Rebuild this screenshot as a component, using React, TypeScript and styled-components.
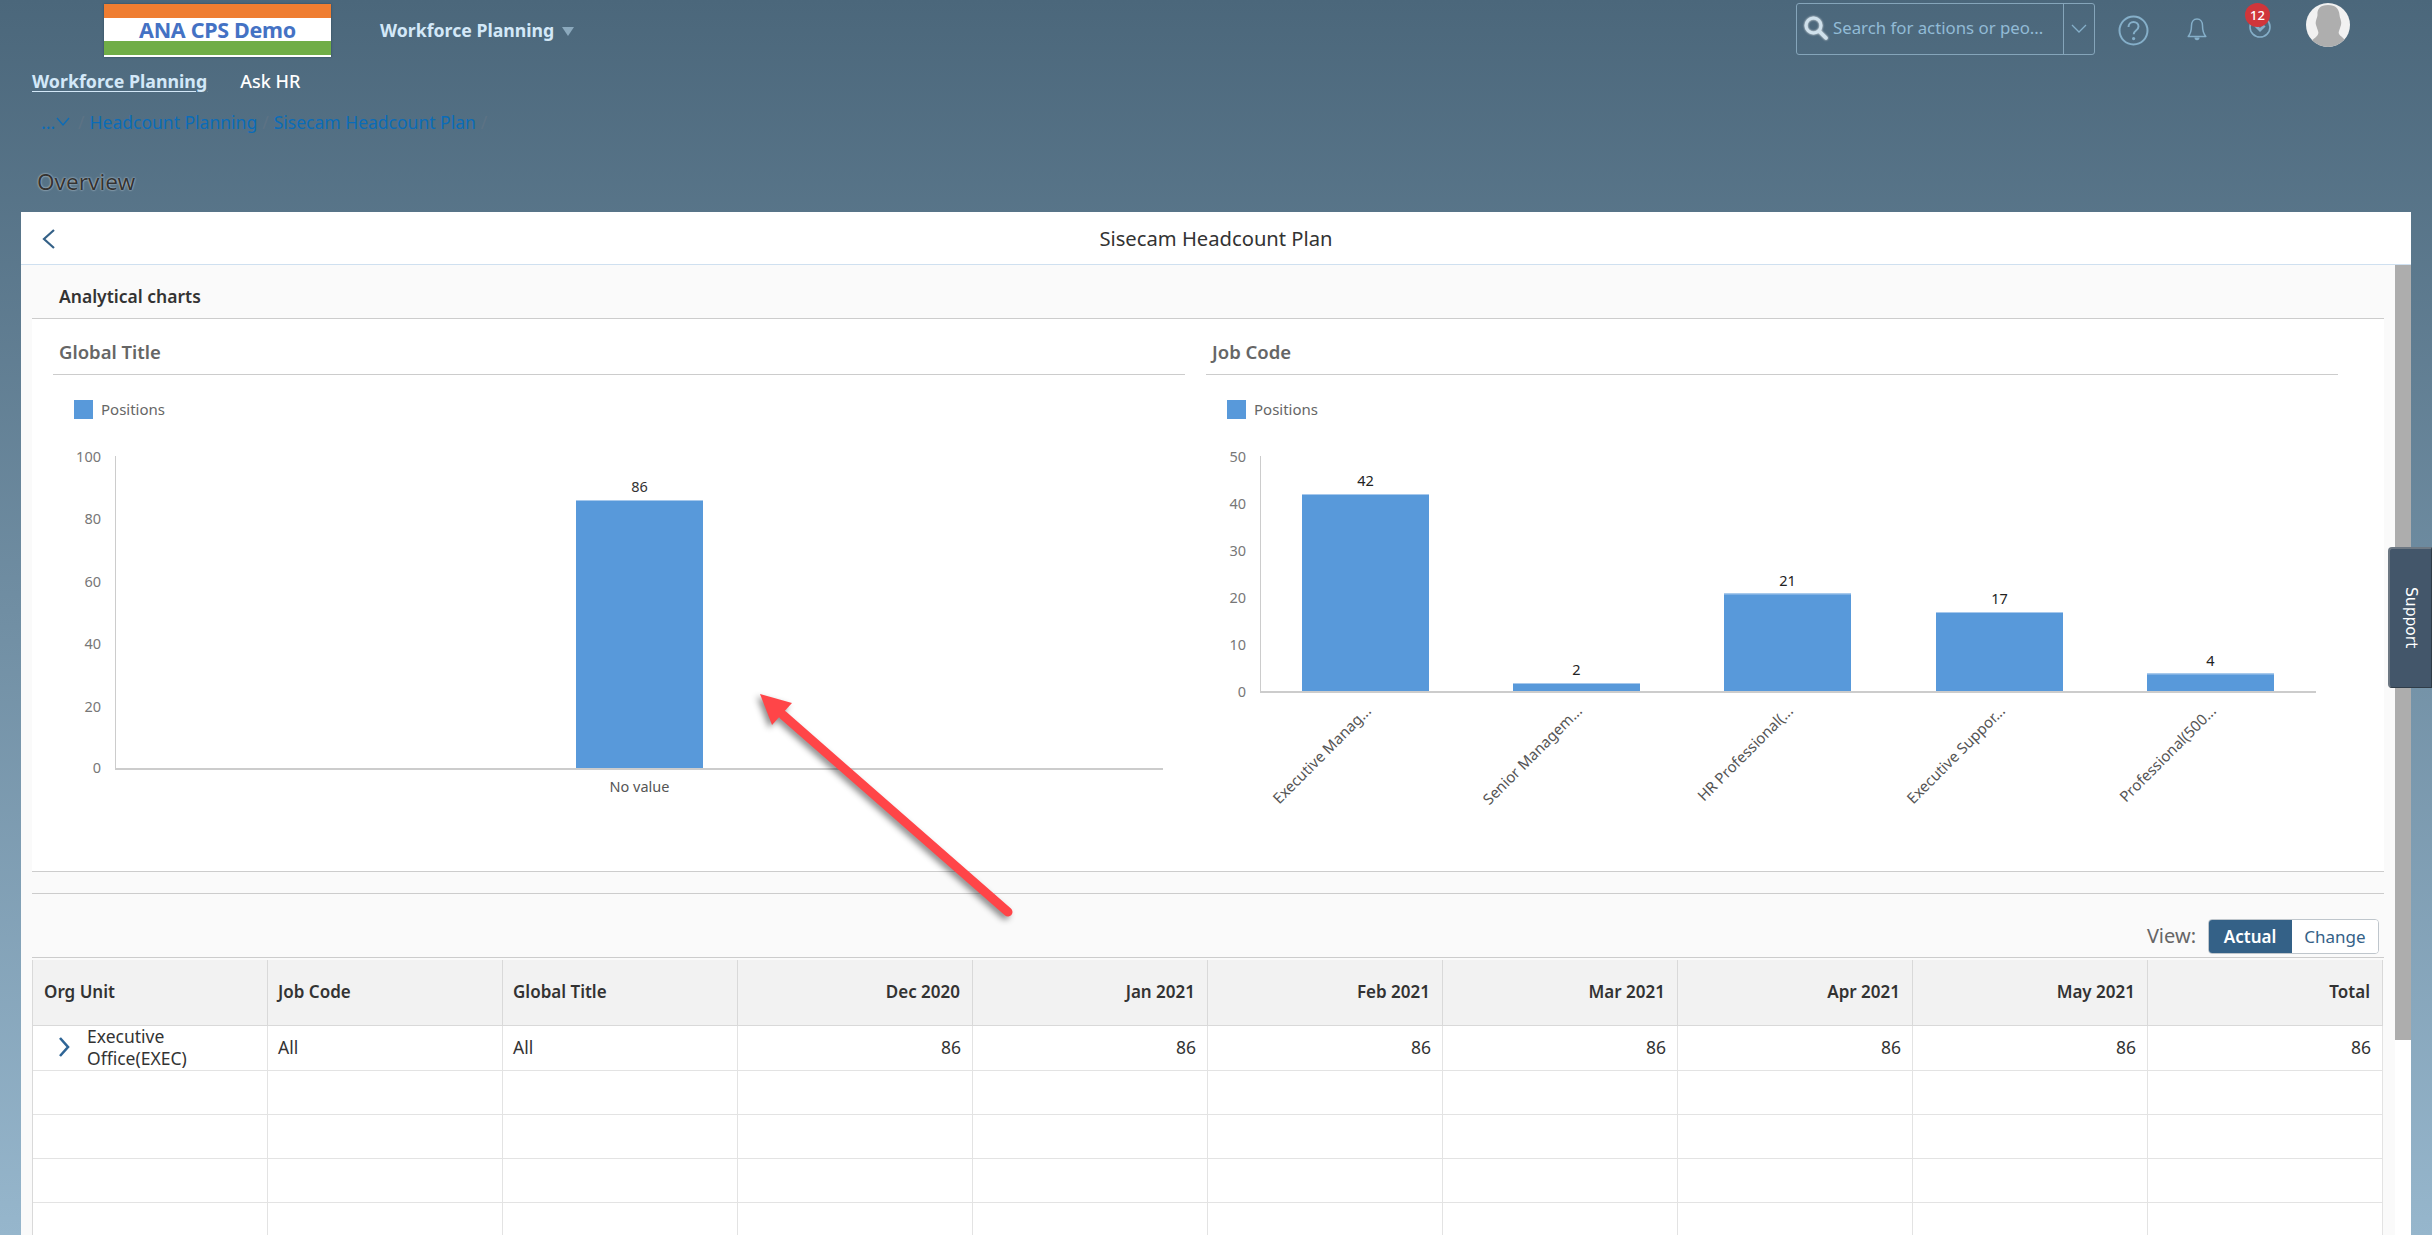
import React from "react";
import styled, { createGlobalStyle } from "styled-components";

const FONT = `"Noto Sans", "Open Sans", Arial, sans-serif`;

const Global = createGlobalStyle`
  html, body { margin: 0; padding: 0; }
  body { font-family: ${FONT}; overflow: hidden; }
  * { box-sizing: border-box; }
`;

const Page = styled.div`
  position: relative;
  width: 2432px;
  height: 1235px;
  overflow: hidden;
  display: flex;
  flex-direction: column;
  background: linear-gradient(180deg, #4b677b 0%, #96b6cc 100%);
`;

const TopBar = styled.header`
  height: 60px;
  display: flex;
  align-items: flex-start;
  padding-left: 104px;
`;

const Logo = styled.div`
  width: 227px;
  height: 53px;
  margin-top: 4px;
  display: flex;
  flex-direction: column;
  background: #fff;
  box-shadow: 0 0 2px rgba(20, 40, 60, 0.5);
`;

const LogoStripe = styled.div<{ $color: string }>`
  height: 14px;
  background: ${(p) => p.$color};
`;

const LogoText = styled.div`
  height: 23px;
  line-height: 23px;
  text-align: center;
  font-size: 21.5px;
  font-weight: 700;
  letter-spacing: -0.3px;
  color: #4472c4;
`;

const AppMenu = styled.div`
  margin-left: 49px;
  height: 60px;
  display: flex;
  align-items: center;
  gap: 8px;
  font-size: 17.7px;
  font-weight: 700;
  color: #d3e8f8;
`;

const Caret = styled.span`
  width: 0;
  height: 0;
  border-left: 6px solid transparent;
  border-right: 6px solid transparent;
  border-top: 9px solid #8ba9bd;
  margin-top: 2px;
`;

const Tools = styled.div`
  margin-left: auto;
  height: 60px;
  display: flex;
  align-items: flex-start;
  padding-right: 82px;
`;

const SearchBox = styled.div`
  margin-top: 3px;
  width: 299px;
  height: 52px;
  display: flex;
  border: 1px solid #85a5ba;
  border-radius: 3px;
`;

const SearchField = styled.div`
  flex: 1;
  display: flex;
  align-items: center;
  gap: 5px;
  padding: 0 0 3px 7px;
  font-size: 16.8px;
  color: #92bbd6;
  white-space: nowrap;
`;

const SearchGlyph = styled.svg`
  flex: none;
  filter: drop-shadow(0 0 1px #fff);
`;

const SearchToggle = styled.div`
  width: 31px;
  border-left: 1px solid #85a5ba;
  display: flex;
  align-items: center;
  justify-content: center;
`;

const ToolIcon = styled.svg<{ $left: number; $top: number }>`
  display: block;
  flex: none;
  margin-left: ${(p) => p.$left}px;
  margin-top: ${(p) => p.$top}px;
`;

const Notification = styled.div`
  position: relative;
  margin-left: 42px;
  margin-top: 16px;
  width: 22px;
  height: 22px;
`;

const Badge = styled.span`
  position: absolute;
  left: -4px;
  top: -13px;
  width: 25px;
  height: 24px;
  border-radius: 50%;
  background: #d0363b;
  color: #fff;
  font-size: 13px;
  font-weight: 500;
  line-height: 24px;
  text-align: center;
`;

const Avatar = styled.div`
  margin-left: 35px;
  margin-top: 3px;
  width: 44px;
  height: 44px;
  border-radius: 50%;
  overflow: hidden;
  background: #f1f1f1;
`;

const SubNav = styled.nav`
  height: 44px;
  display: flex;
  align-items: center;
  padding: 0 0 3px 32px;
  gap: 33px;
`;

const SubNavItem = styled.span<{ $active?: boolean }>`
  color: ${(p) => (p.$active ? "#d3e8f8" : "#fff")};
  font-size: ${(p) => (p.$active ? 17.8 : 18)}px;
  font-weight: ${(p) => (p.$active ? 700 : 500)};
  text-decoration: ${(p) => (p.$active ? "underline" : "none")};
  text-underline-offset: 3px;
`;

const Breadcrumb = styled.div`
  height: 36px;
  display: flex;
  align-items: center;
  padding-left: 41px;
  font-size: 17.5px;
  color: #0a6cb8;
`;

const Slash = styled.span`
  color: #5d7385;
  margin: 0 5px;
`;

const BreadcrumbMore = styled.span`
  display: flex;
  align-items: center;
  gap: 1px;
  margin-right: 3px;
`;

const Overview = styled.h1`
  margin: 0;
  height: 72px;
  display: flex;
  align-items: center;
  padding: 10px 0 0 37px;
  font-size: 22.5px;
  font-weight: 400;
  color: #333;
  text-shadow: 0 0 2px #e3e9ed;
`;

const Panel = styled.main`
  width: 2390px;
  margin-left: 21px;
  flex: 1;
  min-height: 0;
  display: flex;
  flex-direction: column;
  background: #fafafa;
`;

const PanelHeader = styled.div`
  position: relative;
  height: 53px;
  flex: none;
  display: flex;
  align-items: center;
  justify-content: center;
  background: #fff;
  border-bottom: 1px solid #cfe0f0;
  font-size: 20.2px;
  color: #333;
`;

const BackButton = styled.svg`
  position: absolute;
  left: 21px;
  top: 17px;
`;

const PanelBody = styled.div`
  flex: 1;
  min-height: 0;
  display: flex;
`;

const Content = styled.div`
  flex: 1;
  min-width: 0;
  padding: 0 11px;
  overflow: hidden;
`;

const ScrollTrack = styled.div`
  width: 16px;
  flex: none;
  background: #fff;
`;

const ScrollThumb = styled.div`
  height: 775px;
  background: #adadad;
`;

const SectionHeader = styled.div`
  height: 54px;
  padding: 8px 0 0 27px;
  display: flex;
  align-items: center;
  border-bottom: 1px solid #ccc;
  font-size: 17.5px;
  font-weight: 600;
  color: #333;
`;

const ChartsCard = styled.section`
  height: 553px;
  background: #fff;
  border-bottom: 1px solid #ccc;
  display: flex;
  padding-left: 21px;
  gap: 21px;
`;

const ChartColumn = styled.div`
  width: 1132px;
  flex: none;
`;

const ChartTitle = styled.div`
  height: 56px;
  padding: 9px 0 0 6px;
  display: flex;
  align-items: center;
  border-bottom: 1px solid #ccc;
  font-size: 18.5px;
  font-weight: 600;
  color: #666;
`;

const Legend = styled.div`
  height: 65px;
  padding: 25px 0 0 21px;
  display: flex;
  align-items: flex-start;
  gap: 8px;
  font-size: 15px;
  line-height: 18px;
  color: #666;
`;

const LegendSwatch = styled.span`
  width: 19px;
  height: 19px;
  background: #5899da;
`;

const ChartSvg = styled.svg`
  display: block;
  font-family: ${FONT};
`;

const Spacer = styled.div`
  height: 22px;
  border-bottom: 1px solid #ccc;
`;

const TableToolbar = styled.div`
  height: 64px;
  display: flex;
  align-items: flex-start;
  justify-content: flex-end;
  padding: 25px 5px 0 0;
  gap: 12px;
  border-bottom: 1px solid #ccc;
  color: #666;
`;

const ViewLabel = styled.span`
  font-size: 20px;
  line-height: 34px;
`;

const Segmented = styled.div`
  display: flex;
  height: 35px;
  width: 171px;
  border-radius: 4px;
  overflow: hidden;
  border: 1px solid #bfc6cc;
  background: #fff;
`;

const Segment = styled.span<{ $on?: boolean }>`
  display: flex;
  align-items: center;
  justify-content: center;
  flex: ${(p) => (p.$on ? "0 0 84px" : 1)};
  margin: ${(p) => (p.$on ? "-1px 0 -1px -1px" : 0)};
  background: ${(p) => (p.$on ? "#346187" : "#fff")};
  color: ${(p) => (p.$on ? "#fff" : "#346187")};
  font-size: 17px;
  font-weight: ${(p) => (p.$on ? 600 : 400)};
`;

const Table = styled.div`
  margin-top: 2px;
  display: grid;
  grid-template-columns: repeat(10, 235px);
  border-left: 1px solid #d9d9d9;
  color: #333;
`;

const HeadCell = styled.div<{ $right?: boolean; $first?: boolean }>`
  height: 66px;
  display: flex;
  align-items: center;
  justify-content: ${(p) => (p.$right ? "flex-end" : "flex-start")};
  padding: 0 12px 2px ${(p) => (p.$first ? 11 : 10)}px;
  background: #f2f2f2;
  border-right: 1px solid #d9d9d9;
  border-bottom: 1px solid #d9d9d9;
  font-size: 17px;
  font-weight: 600;
`;

const Cell = styled.div<{ $right?: boolean; $tall?: boolean }>`
  height: ${(p) => (p.$tall ? 45 : 44)}px;
  display: flex;
  align-items: center;
  justify-content: ${(p) => (p.$right ? "flex-end" : "flex-start")};
  padding: 0 11px 2px 10px;
  background: #fff;
  border-right: 1px solid #e3e3e3;
  border-bottom: 1px solid #e3e3e3;
  font-size: 17.5px;
`;

const TreeCell = styled(Cell)`
  padding-left: 25px;
  gap: 17px;
`;

const TreeChevron = styled.svg`
  flex: none;
`;

const TreeLabel = styled.span`
  line-height: 22px;
  font-size: 17.5px;
`;

const SupportTab = styled.aside`
  position: absolute;
  left: 2388px;
  top: 547px;
  width: 44px;
  height: 141px;
  display: flex;
  align-items: center;
  justify-content: center;
  background: #43566a;
  border: 1px solid #2f3c48;
  border-top: 2px solid #6d7883;
  border-left: 2px solid #6d7883;
  border-radius: 4px 0 0 4px;
  color: #fff;
  font-family: "DejaVu Sans", sans-serif;
  font-size: 15.5px;
`;

const SupportText = styled.span`
  writing-mode: vertical-rl;
`;

const ArrowOverlay = styled.svg`
  position: absolute;
  left: 740px;
  top: 680px;
  pointer-events: none;
  filter: drop-shadow(-3px 3px 3px rgba(0, 0, 0, 0.45));
`;

type Bar = { v: number; x: number; top: number; label?: string };

const AXIS = "#ccc";
const TICK = "#777";

function GlobalChart() {
  // SVG origin: page (53, 440)
  const ticks: [string, number][] = [
    ["100", 18], ["80", 79.5], ["60", 143], ["40", 205], ["20", 268], ["0", 329],
  ];
  return (
    <ChartSvg width={1131} height={431} viewBox="0 0 1131 431">
      <rect x={62} y={16} width={1} height={313} fill={AXIS} />
      <rect x={62} y={328} width={1048} height={2} fill={AXIS} />
      {ticks.map(([t, y]) => (
        <text key={t} x={48} y={y + 4} textAnchor="end" fontSize={14.5} fill={TICK}>{t}</text>
      ))}
      <rect x={523} y={61} width={127} height={267} fill="#5899da" />
      <rect x={523} y={60} width={127} height={1} fill="#a6c8ec" />
      <text x={586.5} y={52} textAnchor="middle" fontSize={14.5} fill="#333">86</text>
      <text x={586.5} y={352} textAnchor="middle" fontSize={14.5} fill="#555">No value</text>
    </ChartSvg>
  );
}

function JobChart() {
  // SVG origin: page (1206, 440)
  const ticks: [string, number][] = [
    ["50", 18], ["40", 65], ["30", 112], ["20", 159], ["10", 206], ["0", 253],
  ];
  const bars: Bar[] = [
    { v: 42, x: 96, top: 54, label: "Executive Manag..." },
    { v: 2, x: 307, top: 243, label: "Senior Managem..." },
    { v: 21, x: 518, top: 153.5, label: "HR Professional(..." },
    { v: 17, x: 730, top: 172, label: "Executive Suppor..." },
    { v: 4, x: 941, top: 233.5, label: "Professional(500..." },
  ];
  return (
    <ChartSvg width={1131} height={431} viewBox="0 0 1131 431">
      <rect x={54} y={16} width={1} height={236} fill={AXIS} />
      {ticks.map(([t, y]) => (
        <text key={t} x={40} y={y + 4} textAnchor="end" fontSize={14.5} fill={TICK}>{t}</text>
      ))}
      {bars.map((b) => (
        <g key={b.v}>
          <rect x={b.x} y={b.top} width={127} height={251 - b.top} fill="#5899da" />
          <rect x={b.x} y={b.top} width={127} height={1} fill="#a6c8ec" />
          <text x={b.x + 63.5} y={b.top - 8} textAnchor="middle" fontSize={14.5} fill="#222">{b.v}</text>
          <text
            x={b.x + 70}
            y={272}
            textAnchor="end"
            fontSize={15}
            fill="#555"
            transform={`rotate(-45 ${b.x + 70} 272)`}
          >
            {b.label}
          </text>
        </g>
      ))}
      <rect x={54} y={251} width={1056} height={2} fill={AXIS} />
    </ChartSvg>
  );
}

const months = ["Dec 2020", "Jan 2021", "Feb 2021", "Mar 2021", "Apr 2021", "May 2021", "Total"];

export default function App() {
  return (
    <Page>
      <Global />
      <TopBar>
        <Logo>
          <LogoStripe $color="#ef7d31" />
          <LogoText>ANA CPS Demo</LogoText>
          <LogoStripe $color="#70ad47" />
        </Logo>
        <AppMenu>
          Workforce Planning <Caret />
        </AppMenu>
        <Tools>
          <SearchBox>
            <SearchField>
              <SearchGlyph width="24" height="24" viewBox="0 0 24 24" fill="none">
                <circle cx="9.5" cy="9.5" r="7.5" stroke="#cfe1ec" strokeWidth="3" />
                <path d="M15 15l7 7" stroke="#cfe1ec" strokeWidth="3.5" strokeLinecap="round" />
              </SearchGlyph>
              Search for actions or peo...
            </SearchField>
            <SearchToggle>
              <svg width="16" height="10" viewBox="0 0 16 10" fill="none">
                <path d="M1 1l7 7 7-7" stroke="#85afc9" strokeWidth="1.3" />
              </svg>
            </SearchToggle>
          </SearchBox>
          <ToolIcon $left={23} $top={15} width="31" height="31" viewBox="0 0 31 31" fill="none">
            <circle cx="15.5" cy="15.5" r="14" stroke="#85afc9" strokeWidth="2" />
            <path d="M10.5 12c0-3 2.2-5 5-5s5 2 5 4.6c0 2-1.1 3.1-2.7 4.2-1.4 1-2.1 1.8-2.1 3.4" stroke="#85afc9" strokeWidth="2" />
            <circle cx="15.6" cy="23.6" r="1.6" fill="#85afc9" />
          </ToolIcon>
          <ToolIcon $left={38} $top={18} width="20" height="24" viewBox="0 0 20 24" fill="none">
            <path d="M10 1c-3.5 0-5.5 2.8-5.5 6.5 0 5-.8 8-3.3 11h17.600c-2.500-3-3.300-6-3.300-11C15.500 3.800 13.500 1 10 1z" stroke="#85afc9" strokeWidth="1.500" strokeLinejoin="round" />
            <path d="M7.500 19.500h5a2.500 2.800 0 0 1-5 0z" fill="#85afc9" />
          </ToolIcon>
          <Notification>
            <svg width="22" height="22" viewBox="0 0 22 22" fill="none">
              <circle cx="11" cy="11" r="10" stroke="#85afc9" strokeWidth="1.600" />
              <path d="M6.500 9.500l4.500 4.500 4.500-4.500" stroke="#85afc9" strokeWidth="3" />
            </svg>
            <Badge>12</Badge>
          </Notification>
          <Avatar>
            <svg width="44" height="44" viewBox="0 0 44 44">
              <path fill="#aeaeae" d="M22 2c8 0 11 4 11.500 10 .5 4 2.500 6 1.500 10l-2 6c-1 2 0 4 3 6l4 4c-5 5-12 6-18 6-7 0-13-1-17-6l5-4c2-2 3-4 2-6l-2-6c-1-4 1-6 1.500-10C11 6 14 2 22 2z" />
            </svg>
          </Avatar>
        </Tools>
      </TopBar>
      <SubNav>
        <SubNavItem $active>Workforce Planning</SubNavItem>
        <SubNavItem>Ask HR</SubNavItem>
      </SubNav>
      <Breadcrumb>
        <BreadcrumbMore>
          <span>...</span>
          <svg width="14" height="10" viewBox="0 0 14 10" fill="none">
            <path d="M1 1l6 7 6-7" stroke="#0a6cb8" strokeWidth="1.200" />
          </svg>
        </BreadcrumbMore>
        <Slash>/</Slash>
        Headcount Planning
        <Slash>/</Slash>
        Sisecam Headcount Plan
        <Slash>/</Slash>
      </Breadcrumb>
      <Overview>Overview</Overview>
      <Panel>
        <PanelHeader>
          <BackButton width="14" height="20" viewBox="0 0 14 20" fill="none">
            <path d="M12 1L2 10l10 9" stroke="#346187" strokeWidth="2.200" />
          </BackButton>
          Sisecam Headcount Plan
        </PanelHeader>
        <PanelBody>
          <Content>
            <SectionHeader>Analytical charts</SectionHeader>
            <ChartsCard>
              <ChartColumn>
                <ChartTitle>Global Title</ChartTitle>
                <Legend><LegendSwatch />Positions</Legend>
                <GlobalChart />
              </ChartColumn>
              <ChartColumn>
                <ChartTitle>Job Code</ChartTitle>
                <Legend><LegendSwatch />Positions</Legend>
                <JobChart />
              </ChartColumn>
            </ChartsCard>
            <Spacer />
            <TableToolbar>
              <ViewLabel>View:</ViewLabel>
              <Segmented>
                <Segment $on>Actual</Segment>
                <Segment>Change</Segment>
              </Segmented>
            </TableToolbar>
            <Table>
              <HeadCell $first>Org Unit</HeadCell>
              <HeadCell>Job Code</HeadCell>
              <HeadCell>Global Title</HeadCell>
              {months.map((m) => (
                <HeadCell key={m} $right>{m}</HeadCell>
              ))}
              <TreeCell $tall>
                <TreeChevron width="12" height="20" viewBox="0 0 12 20" fill="none">
                  <path d="M2 1l8 9-8 9" stroke="#2f6596" strokeWidth="2.600" />
                </TreeChevron>
                <TreeLabel>Executive Office(EXEC)</TreeLabel>
              </TreeCell>
              <Cell $tall>All</Cell>
              <Cell $tall>All</Cell>
              {months.map((m) => (
                <Cell key={m} $tall $right>86</Cell>
              ))}
              {Array.from({ length: 40 }, (_, i) => (
                <Cell key={i} />
              ))}
            </Table>
          </Content>
          <ScrollTrack><ScrollThumb /></ScrollTrack>
        </PanelBody>
      </Panel>
      <SupportTab><SupportText>Support</SupportText></SupportTab>
      <ArrowOverlay width="290" height="250" viewBox="0 0 290 250" fill="none">
        <path d="M43 35L268 232" stroke="#ff4548" strokeWidth="9" strokeLinecap="round" />
        <path d="M20 14L52 23 32 45z" fill="#ff4548" />
      </ArrowOverlay>
    </Page>
  );
}
